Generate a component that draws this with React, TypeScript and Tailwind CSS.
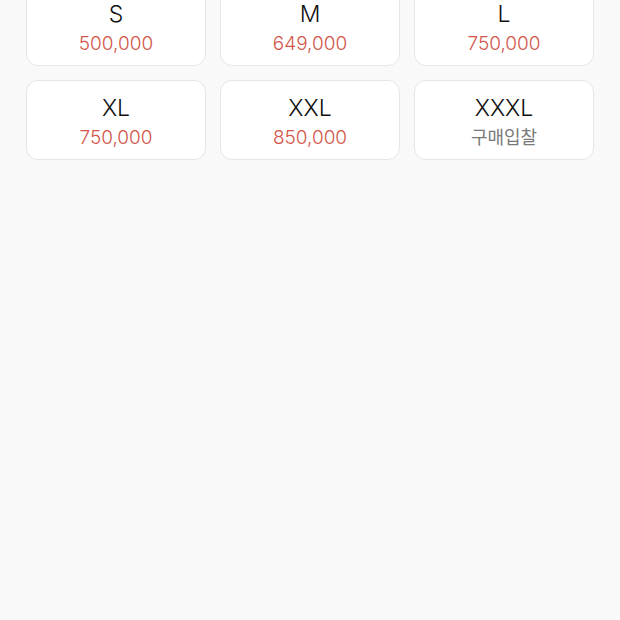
const sizes = [
  { size: 'S', price: '500,000' },
  { size: 'M', price: '649,000' },
  { size: 'L', price: '750,000' },
  { size: 'XL', price: '750,000' },
  { size: 'XXL', price: '850,000' },
  { size: 'XXXL', price: null },
]

export default function App() {
  return (
    <div className="h-[620px] w-[620px] overflow-hidden bg-[#f9f9f9] font-['Inter','Noto_Sans_CJK_KR',sans-serif]">
      <div className="-mt-[14px] grid grid-cols-3 gap-[14px] px-[26px]">
        {sizes.map((s) => (
          <div
            key={s.size}
            className="flex h-[80px] flex-col items-center rounded-[12px] border border-[#e6e6e6] bg-white pt-[13px]"
          >
            <span className="text-[23px] font-light leading-[28px] text-[#111]">{s.size}</span>
            {s.price ? (
              <span className="mt-[3px] text-[19px] font-light leading-[26px] text-[#d2564a]">{s.price}</span>
            ) : (
              <span className="mt-[3px] text-[18px] leading-[26px] text-[#7a7a7a]">구매입찰</span>
            )}
          </div>
        ))}
      </div>
    </div>
  )
}
